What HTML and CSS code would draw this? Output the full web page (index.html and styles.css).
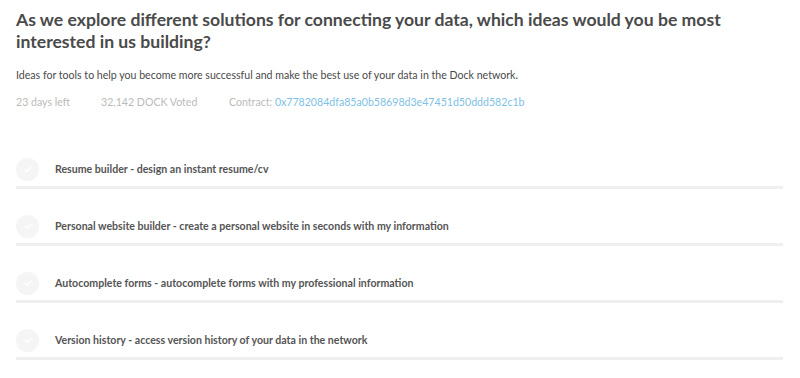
FILE: index.html
```html
<!DOCTYPE html>
<html>
<head>
<meta charset="utf-8">
<link rel="stylesheet" href="styles.css">
</head>
<body>
<div class="page">
  <h1 class="title">As we explore different solutions for connecting your data, which ideas would you be most interested in us building?</h1>
  <p class="desc">Ideas for tools to help you become more successful and make the best use of your data in the Dock network.</p>
  <div class="meta">
    <span class="meta-item days">23 days left</span>
    <span class="meta-item voted">32,142 DOCK Voted</span>
    <span class="meta-item">Contract: <span class="hash">0x7782084dfa85a0b58698d3e47451d50ddd582c1b</span></span>
  </div>
  <ul class="options">
    <li class="option">
      <div class="option-row">
        <span class="check"><svg width="12" height="12" viewBox="0 0 12 12"><path d="M3 6.2 L5.2 8.2 L9 4" fill="none" stroke="#fff" stroke-width="1.3" stroke-linecap="round" stroke-linejoin="round"/></svg></span>
        <span class="label">Resume builder - design an instant resume/cv</span>
      </div>
      <div class="bar"></div>
    </li>
    <li class="option">
      <div class="option-row">
        <span class="check"><svg width="12" height="12" viewBox="0 0 12 12"><path d="M3 6.2 L5.2 8.2 L9 4" fill="none" stroke="#fff" stroke-width="1.3" stroke-linecap="round" stroke-linejoin="round"/></svg></span>
        <span class="label">Personal website builder - create a personal website in seconds with my information</span>
      </div>
      <div class="bar"></div>
    </li>
    <li class="option">
      <div class="option-row">
        <span class="check"><svg width="12" height="12" viewBox="0 0 12 12"><path d="M3 6.2 L5.2 8.2 L9 4" fill="none" stroke="#fff" stroke-width="1.3" stroke-linecap="round" stroke-linejoin="round"/></svg></span>
        <span class="label">Autocomplete forms - autocomplete forms with my professional information</span>
      </div>
      <div class="bar"></div>
    </li>
    <li class="option">
      <div class="option-row">
        <span class="check"><svg width="12" height="12" viewBox="0 0 12 12"><path d="M3 6.2 L5.2 8.2 L9 4" fill="none" stroke="#fff" stroke-width="1.3" stroke-linecap="round" stroke-linejoin="round"/></svg></span>
        <span class="label">Version history - access version history of your data in the network</span>
      </div>
      <div class="bar"></div>
    </li>
  </ul>
</div>
</body>
</html>
```
FILE: styles.css
```css
* { box-sizing: border-box; }
html, body { margin: 0; padding: 0; background: #fff; }
body { font-family: Lato, "Open Sans", sans-serif; }
.page {
  padding: 9px 17px 0 16px;
  width: 800px;
}
.title {
  margin: 0;
  font-size: 17.6px;
  line-height: 22px;
  font-weight: 700;
  color: #4a4a4a;
  max-width: 740px;
}
.desc {
  margin: 15px 0 0;
  font-size: 10.6px;
  line-height: 14px;
  color: #4a4a4a;
}
.meta {
  margin-top: 13px;
  display: flex;
  font-size: 10.6px;
  line-height: 14px;
  color: #bbbbbb;
}
.meta-item { white-space: nowrap; }
.days { width: 85px; }
.voted { width: 128px; }
.hash { color: #7dbfe6; }
.options {
  list-style: none;
  margin: 48px 0 0;
  padding: 0;
}
.option { margin-bottom: 25px; }
.option-row {
  display: flex;
  align-items: center;
  gap: 16px;
  height: 24px;
}
.check {
  width: 23px;
  height: 23px;
  border-radius: 50%;
  background: #f5f5f5;
  display: flex;
  align-items: center;
  justify-content: center;
  flex: none;
}
.label {
  font-size: 10.6px;
  font-weight: 700;
  color: #555555;
}
.bar {
  margin-top: 5px;
  height: 3px;
  background: #efefef;
}
```
